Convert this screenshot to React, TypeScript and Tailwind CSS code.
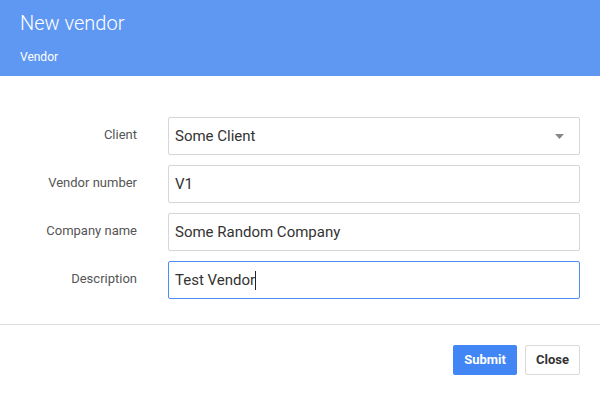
const font = { fontFamily: 'Roboto, "Liberation Sans", sans-serif' };

type Field = { label: string; value: string; select?: boolean; focused?: boolean };

const FIELDS: Field[] = [
  { label: 'Client', value: 'Some Client', select: true },
  { label: 'Vendor number', value: 'V1' },
  { label: 'Company name', value: 'Some Random Company' },
  { label: 'Description', value: 'Test Vendor', focused: true },
];

export default function App() {
  return (
    <div className="w-[600px] h-[395px] bg-white flex flex-col" style={font}>
      {/* Header */}
      <header className="h-[76px] bg-[#5f98f3] px-5 pt-[11px]">
        <h1 className="text-[20px] font-light text-white leading-[25px]">New vendor</h1>
        <p className="text-[12px] text-white mt-[12px]">Vendor</p>
      </header>

      {/* Form */}
      <main className="pt-[41px] pb-[25px] pr-5 flex flex-col gap-[10px] border-b border-[#dedede]">
        {FIELDS.map((f) => (
          <div key={f.label} className="flex items-center">
            <label className="w-[137px] text-right text-[13px] text-[#555] pb-[2px]">{f.label}</label>
            <div
              className={[
                'ml-[31px] flex-1 h-[38px] flex items-center px-[6px] text-[15px] text-[#333] bg-white border rounded-[2px]',
                f.focused ? 'border-[#4c8df6]' : 'border-[#d6d6d6]',
              ].join(' ')}
            >
              <span>{f.value}</span>
              {f.focused && <span className="w-px h-[19px] bg-[#222]" />}
              {f.select && (
                <svg className="ml-auto mr-[9px]" width="9" height="5" viewBox="0 0 9 5">
                  <path d="M0 0h9L4.5 5z" fill="#888" />
                </svg>
              )}
            </div>
          </div>
        ))}
      </main>

      {/* Actions */}
      <footer className="flex justify-end gap-2 pt-[20px] pr-5">
        <button className="h-[30px] w-[64px] rounded-[2px] bg-[#4286f5] text-white text-[13px] font-bold">
          Submit
        </button>
        <button className="h-[30px] w-[55px] rounded-[2px] bg-white border border-[#d9d9d9] text-[#333] text-[13px] font-bold">
          Close
        </button>
      </footer>
    </div>
  );
}
